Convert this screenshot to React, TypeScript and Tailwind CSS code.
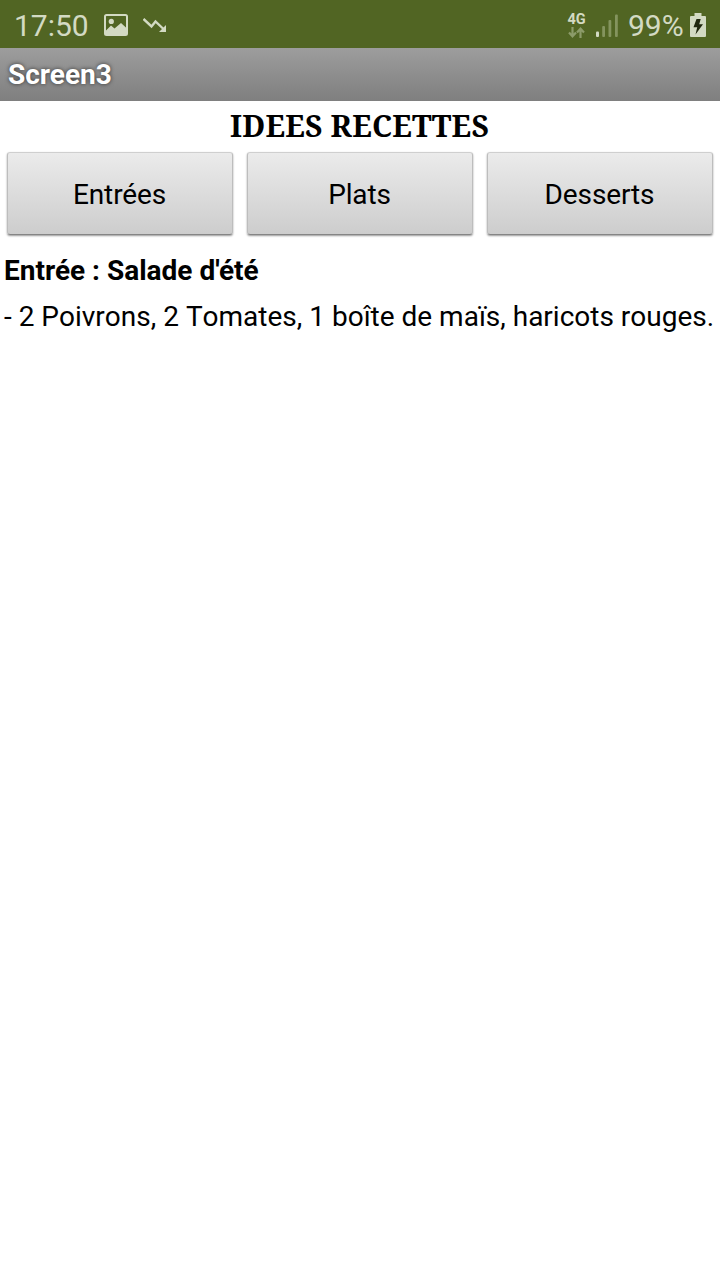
const categories = ["Entrées", "Plats", "Desserts"];

function PictureIcon() {
  return (
    <svg className="ml-[15px] mt-[14px] h-[22px] w-6 shrink-0" viewBox="0 0 24 22" fill="none">
      <rect x="1" y="1" width="22" height="20" rx="1.5" stroke="#d3dac3" strokeWidth="2" />
      <circle cx="7.3" cy="7.4" r="2.6" fill="#d3dac3" />
      <path d="M1.5 17 7 11.500l3.500 3 6.500-5.500 6 5.500v6.500h-21.500z" fill="#d3dac3" />
    </svg>
  );
}

function TrendDownIcon() {
  return (
    <svg className="ml-[15px] mt-[17px] h-4 w-6 shrink-0" viewBox="0 0 24 16" fill="none">
      <path d="M.5 2 8.500 9.500l4-5L21 12.500" stroke="#d3dac3" strokeWidth="2.400" />
      <path d="M23 8v7H16z" fill="#d3dac3" />
    </svg>
  );
}

function NetworkIcon() {
  return (
    <div className="mt-[11px] flex w-[19px] flex-col items-center">
      <span className="h-[16px] text-[14.500px] font-bold leading-[17px] text-[#d3dac3]">4G</span>
      <svg className="h-[11px] w-[17px]" viewBox="0 0 17 11" fill="none" stroke="#8c9b69" strokeWidth="2.200">
        <path d="M4.500 0v9M1 5.500l3.500 3.800L8 5.500M12.500 11V2M9 5.500l3.500-3.800L16 5.500" />
      </svg>
    </div>
  );
}

function SignalIcon() {
  return (
    <svg className="ml-[10px] mt-[14px] h-[23px] w-[22px]" viewBox="0 0 22 23">
      <rect x="0" y="17.500" width="3" height="5.500" rx="1" fill="#d3dac3" />
      <rect x="6.200" y="12" width="2.800" height="11" rx="1" fill="#84945e" />
      <rect x="12.500" y="6" width="2.800" height="17" rx="1" fill="#84945e" />
      <rect x="19" y="0.500" width="2.800" height="22.500" rx="1" fill="#84945e" />
    </svg>
  );
}

function BatteryIcon() {
  return (
    <svg className="ml-[7px] mt-[13px] h-6 w-4" viewBox="0 0 16 24">
      <path d="M4.500 0h7v3H15q1 0 1 1v19q0 1-1 1H1q-1 0-1-1V4q0-1 1-1h3.500z" fill="#d3dac3" />
      <path d="M6.500 6h4.200L9.200 11.200h3.800L5.500 21.500l1.700-7.300H3.500z" fill="#20270f" />
    </svg>
  );
}

export default function App() {
  return (
    <div className="h-[1280px] w-[720px] overflow-hidden bg-white font-['Roboto',sans-serif] text-black">
      <header className="flex h-12 items-start justify-between bg-[#516523] pl-[14px] pr-[14px]">
        <div className="flex items-start">
          <span className="mt-[6px] w-[75px] whitespace-nowrap text-[30px] leading-[40px] text-[#d3dac3]">17:50</span>
          <PictureIcon />
          <TrendDownIcon />
        </div>
        <div className="flex items-start">
          <NetworkIcon />
          <SignalIcon />
          <span className="ml-[10px] mt-[6px] w-[55px] whitespace-nowrap text-[30px] leading-[40px] text-[#d3dac3]">99%</span>
          <BatteryIcon />
        </div>
      </header>

      <div className="h-[53px] bg-linear-to-b from-[#9d9d9d] to-[#7f7f7f] pl-2">
        <h1 className="text-[28px] font-bold leading-[53px] text-white [text-shadow:0_0_4px_rgba(0,0,0,0.65)]">Screen3</h1>
      </div>

      <main>
        <h2 className="h-[51px] pr-px text-center font-['Noto_Serif','Liberation_Serif',serif] text-[30px] font-bold leading-[50px] tracking-[0.2px]">IDEES RECETTES</h2>
        <nav className="grid grid-cols-3 gap-[14px] px-[7px]">
          {categories.map((name) => (
            <button
              key={name}
              className="h-[83px] rounded-[3px] border border-[#bdbdbd] border-t-[#cfcfcf] border-b-[#858585] bg-linear-to-b from-[#ebebeb] to-[#cdcdcd] pr-px pt-[2px] text-[28px] leading-[40px] tracking-[-0.12px] shadow-[0_1px_2px_rgba(0,0,0,0.4)]"
            >
              {name}
            </button>
          ))}
        </nav>
        <section className="pl-1">
          <h3 className="mt-[16px] whitespace-nowrap text-[28px] font-bold leading-[40px]">Entrée : Salade d'été</h3>
          <p className="mt-[6px] whitespace-nowrap text-[28px] leading-[40px] [font-kerning:none]">- 2 Poivrons, 2 Tomates, 1 boîte de maïs, haricots rouges.</p>
        </section>
      </main>
    </div>
  );
}
